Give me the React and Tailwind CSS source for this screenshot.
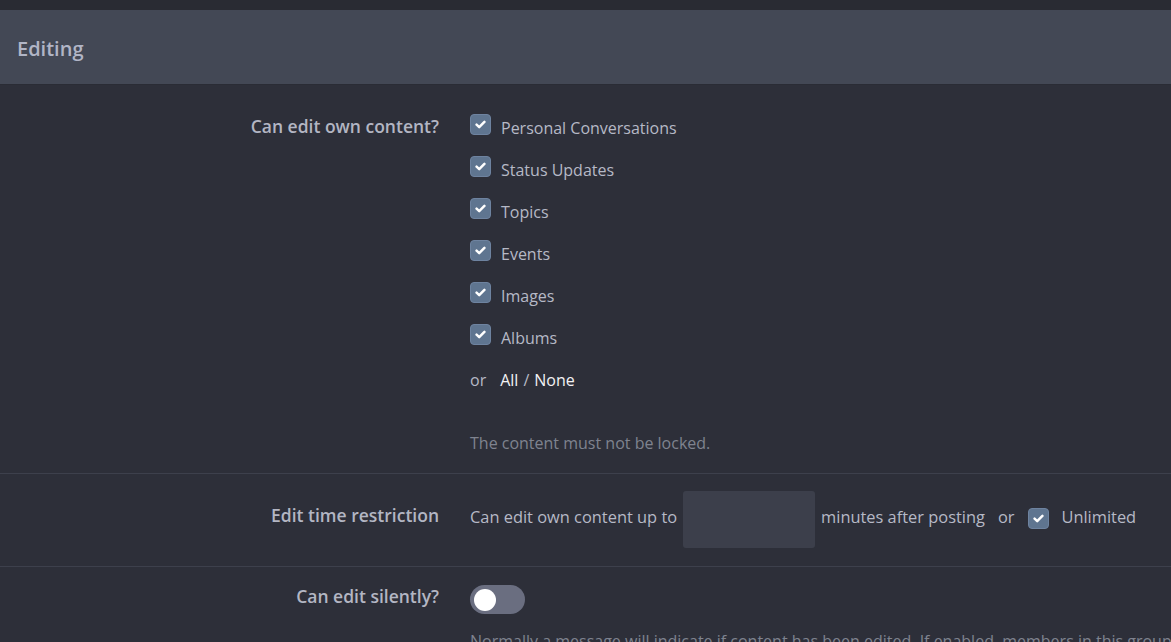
import React from "react";

const Check = () => (
  <span className="flex h-[21px] w-[21px] shrink-0 items-center justify-center rounded-[4px] bg-[#5f7590] border border-[#6e83a0]">
    <svg width="11" height="9" viewBox="0 0 11 9" fill="none">
      <path d="M1.6 4.7 L4.2 7.1 L9.4 1.9" stroke="#ffffff" strokeWidth="2.5" strokeLinecap="round" strokeLinejoin="round" />
    </svg>
  </span>
);

const items = ["Personal Conversations", "Status Updates", "Topics", "Events", "Images", "Albums"];

export default function App() {
  return (
    <div className="min-h-[642px] w-full overflow-hidden bg-[#2d2f39] text-[#b3b6c3]" style={{ fontFamily: '"Open Sans", "Noto Sans", sans-serif' }}>
      <div className="h-[10px] bg-[#292b33]" />
      <div className="flex h-[74px] items-center bg-[#434855] px-[17px] pt-[4px]">
        <h2 className="text-[20px] font-semibold text-[#b1b5c6]">Editing</h2>
      </div>
      <div className="border-t border-[#2a2c35]" />

      {/* Row 1 */}
      <div className="flex border-b border-[#3d404c]">
        <div className="w-[439px] shrink-0 pt-[28px] text-right text-[17.5px] font-semibold leading-[26px] text-[#b3b6c3]">
          Can edit own content?
        </div>
        <div className="pl-[31px] pt-[29px] pb-[17px]">
          <div className="flex flex-col gap-[15px]">
            {items.map((t) => (
              <div key={t} className="flex items-start gap-[10px]">
                <Check />
                <span className="mt-[1px] text-[16px] leading-[26px] text-[#b6b9c6]">{t}</span>
              </div>
            ))}
            <div className="flex items-start text-[16px] leading-[26px]">
              <span className="mt-[1px] text-[#b6b9c6]">or</span>
              <span className="mt-[1px] ml-[14px] text-[#f2f2f4]">All</span>
              <span className="mt-[1px] mx-[5px] text-[#b6b9c6]">/</span>
              <span className="mt-[1px] text-[#f2f2f4]">None</span>
            </div>
          </div>
          <p className="mt-[37px] text-[16px] leading-[26px] text-[#7f838f]">The content must not be locked.</p>
        </div>
      </div>

      {/* Row 2 */}
      <div className="flex border-b border-[#3d404c]">
        <div className="w-[439px] shrink-0 pt-[28px] text-right text-[17.5px] font-semibold leading-[26px] text-[#b3b6c3]">
          Edit time restriction
        </div>
        <div className="flex items-center pl-[31px] pt-[17px] pb-[18px] text-[16.4px] text-[#b6b9c6]">
          <span className="mb-[4px]">Can edit own content up to</span>
          <div className="ml-[6px] mr-[6px] h-[57px] w-[132px] rounded-[3px] bg-[#3c3f4b]" />
          <span className="mb-[4px]">minutes after posting</span>
          <span className="mb-[4px] ml-[13px]">or</span>
          <span className="mb-[3px] ml-[14px]"><Check /></span>
          <span className="mb-[4px] ml-[12px]">Unlimited</span>
        </div>
      </div>

      {/* Row 3 */}
      <div className="flex">
        <div className="w-[439px] shrink-0 pt-[16px] text-right text-[17.5px] font-semibold leading-[26px] text-[#b3b6c3]">
          Can edit silently?
        </div>
        <div className="pl-[31px] pt-[18px]">
          <div className="flex h-[29px] w-[55px] items-center rounded-full bg-[#6a6e80] px-[4px]">
            <span className="h-[22px] w-[22px] rounded-full bg-white" />
          </div>
          <p className="mt-[14px] whitespace-nowrap text-[16px] leading-[26px] text-[#7f838f]">
            Normally a message will indicate if content has been edited. If enabled, members in this group can edit content without this message being shown.
          </p>
        </div>
      </div>
    </div>
  );
}
